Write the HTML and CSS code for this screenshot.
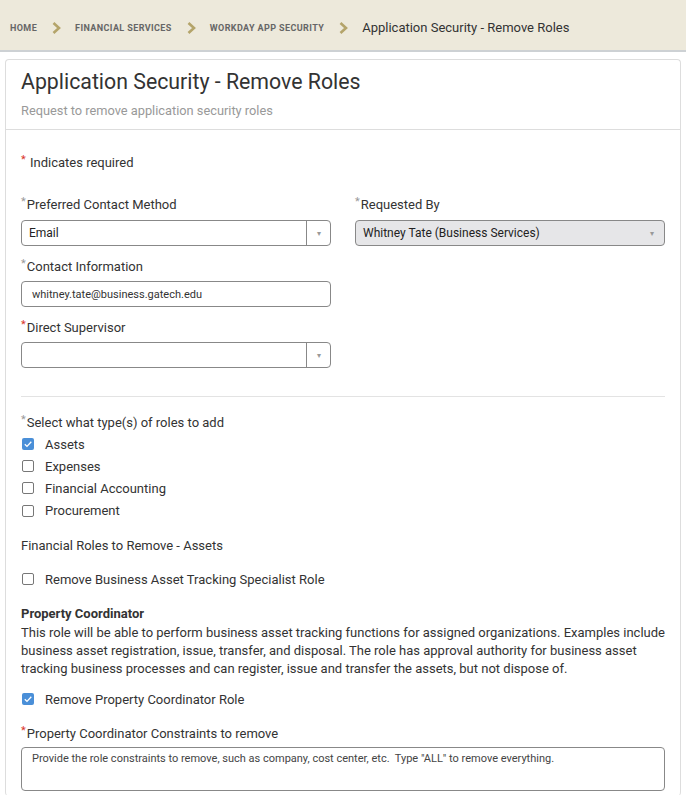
FILE: index.html
```html
<!DOCTYPE html>
<html lang="en">
  <head>
    <meta charset="UTF-8" />
    <title>Application Security - Remove Roles</title>
    <link rel="stylesheet" href="styles.css">
  </head>
  <body>
    <div class="breadcrumbs">
      <a href="#">Home</a>
      <span class="chev"><svg width="9" height="12" viewBox="0 0 9 12"><path d="M1.5 1 L7 6 L1.5 11" fill="none" stroke="#b4a46a" stroke-width="2.6"/></svg></span>
      <a href="#">Financial Services</a>
      <span class="chev"><svg width="9" height="12" viewBox="0 0 9 12"><path d="M1.5 1 L7 6 L1.5 11" fill="none" stroke="#b4a46a" stroke-width="2.6"/></svg></span>
      <a href="#">Workday App Security</a>
      <span class="chev"><svg width="9" height="12" viewBox="0 0 9 12"><path d="M1.5 1 L7 6 L1.5 11" fill="none" stroke="#b4a46a" stroke-width="2.6"/></svg></span>
      <span class="current">Application Security - Remove Roles</span>
    </div>

    <div class="card">
      <div class="card-header">
        <h1>Application Security - Remove Roles</h1>
        <p class="subtitle">Request to remove application security roles</p>
      </div>

      <div class="card-body">
        <p class="req-note"><span class="star red">*</span> Indicates required</p>

        <div class="row">
          <div class="col">
            <div class="group">
              <label class="first"><span class="star">*</span>Preferred Contact Method</label>
              <div class="select"><span>Email</span><span class="caret">&#9662;</span></div>
            </div>
            <div class="group">
              <label><span class="star">*</span>Contact Information</label>
              <div class="input">whitney.tate@business.gatech.edu</div>
            </div>
            <div class="group">
              <label><span class="star red">*</span>Direct Supervisor</label>
              <div class="select"><span></span><span class="caret">&#9662;</span></div>
            </div>
          </div>
          <div class="col">
            <div class="group">
              <label class="first"><span class="star">*</span>Requested By</label>
              <div class="select disabled"><span>Whitney Tate (Business Services)</span><span class="caret">&#9662;</span></div>
            </div>
          </div>
        </div>

        <hr />

        <label class="block-label"><span class="star">*</span>Select what type(s) of roles to add</label>
        <div class="checks">
          <div class="check"><span class="box checked"></span>Assets</div>
          <div class="check"><span class="box"></span>Expenses</div>
          <div class="check"><span class="box"></span>Financial Accounting</div>
          <div class="check"><span class="box"></span>Procurement</div>
        </div>

        <h3 class="section">Financial Roles to Remove - Assets</h3>

        <div class="check single"><span class="box"></span>Remove Business Asset Tracking Specialist Role</div>

        <h4 class="role-title">Property Coordinator</h4>
        <p class="role-desc">This role will be able to perform business asset tracking functions for assigned organizations. Examples include business asset registration, issue, transfer, and disposal. The role has approval authority for business asset tracking business processes and can register, issue and transfer the assets, but not dispose of.</p>

        <div class="check single tight"><span class="box checked"></span>Remove Property Coordinator Role</div>

        <label class="block-label spaced"><span class="star red">*</span>Property Coordinator Constraints to remove</label>
        <div class="textarea">Provide the role constraints to remove, such as company, cost center, etc.&nbsp; Type "ALL" to remove everything.</div>
      </div>
    </div>
  </body>
</html>
```

FILE: styles.css
```css
* {
  box-sizing: border-box;
}

body {
  margin: 0;
  font-family: Roboto, "Liberation Sans", sans-serif;
  font-size: 13px;
  color: #333;
  background: #fff;
}

.breadcrumbs {
  height: 52px;
  background: #ede9db;
  border-bottom: 2px solid #cdd1d4;
  display: flex;
  align-items: center;
  padding: 5px 10px 0;
}

.breadcrumbs a {
  font-size: 9px;
  font-weight: 700;
  text-transform: uppercase;
  letter-spacing: 0.4px;
  color: #666;
  text-decoration: none;
}

.chev {
  display: flex;
  margin: 0 14px 0 15px;
}

.breadcrumbs .current {
  font-size: 13px;
  color: #333;
}

.card {
  margin: 7px 5px 0;
  border: 1px solid #ddd;
  border-radius: 4px;
  border-bottom: none;
}

.card-header {
  padding: 8px 15px 9px;
  border-bottom: 1px solid #ddd;
}

.card-header h1 {
  margin: 0;
  font-size: 21.3px;
  font-weight: 400;
  line-height: 28px;
  color: #333;
}

.subtitle {
  margin: 6px 0 0;
  color: #999;
  font-size: 12.8px;
  line-height: 18px;
}

.card-body {
  padding: 24px 15px 5px;
}

.req-note {
  margin: 0 0 24px;
  line-height: 18px;
}

.star {
  color: #999;
  font-size: 11px;
  vertical-align: top;
  line-height: 12px;
  margin-right: 1px;
}

.star.red {
  color: #d9332b;
}

.row {
  display: grid;
  grid-template-columns: 310px 310px;
  gap: 24px;
}

.group {
  margin-bottom: 12px;
}

.group label,
.block-label {
  display: block;
  line-height: 18px;
  margin-bottom: 5px;
}

.group label.first {
  margin-bottom: 6px;
}

.select,
.input {
  height: 26px;
  border: 1px solid #888;
  border-radius: 4px;
  display: flex;
  align-items: center;
  font-size: 12px;
  color: #222;
}

.select span:first-child {
  flex: 1;
  padding-left: 7px;
  margin-top: -1px;
}

.caret {
  width: 24px;
  height: 100%;
  border-left: 1px solid #888;
  display: flex;
  align-items: center;
  justify-content: center;
  font-size: 8px;
  color: #999;
}

.select.disabled {
  background: #e6e6e8;
}

.select.disabled .caret {
  border-left: none;
}

.input {
  font-size: 11px;
  padding-left: 10px;
  color: #333;
}

hr {
  border: none;
  border-top: 1px solid #e3e3e3;
  margin: 16px 0 17px;
}

.block-label {
  margin-bottom: 1px;
}

.check {
  display: flex;
  align-items: center;
  height: 22px;
  font-size: 13px;
  color: #333;
}

.checks .check:nth-child(4) {
  height: 23px;
}

.box {
  width: 12px;
  height: 12px;
  border: 1px solid #777;
  border-radius: 2px;
  margin: 0 11px 0 1px;
  flex-shrink: 0;
}

.box.checked {
  border: none;
  background: #4a8fd8 url("data:image/svg+xml,%3Csvg xmlns='http://www.w3.org/2000/svg' width='12' height='12'%3E%3Cpath d='M2.8 6.2 L5 8.4 L9.3 3.8' fill='none' stroke='white' stroke-width='1.3'/%3E%3C/svg%3E") no-repeat center;
}

.section {
  margin: 15px 0 0;
  font-size: 13px;
  font-weight: 400;
  line-height: 18px;
}

.check.single {
  margin-top: 13px;
}

.role-title {
  margin: 15px 0 0;
  font-size: 13px;
  font-weight: 700;
  line-height: 18px;
}

.role-desc {
  margin: 1px 0 0;
  line-height: 18px;
}

.check.tight {
  margin-top: 10px;
}

.block-label.spaced {
  margin-top: 15px;
  margin-bottom: 4px;
}

.textarea {
  height: 44px;
  border: 1px solid #888;
  border-radius: 4px;
  padding: 4px 10px;
  font-size: 11px;
  color: #444;
}
```
